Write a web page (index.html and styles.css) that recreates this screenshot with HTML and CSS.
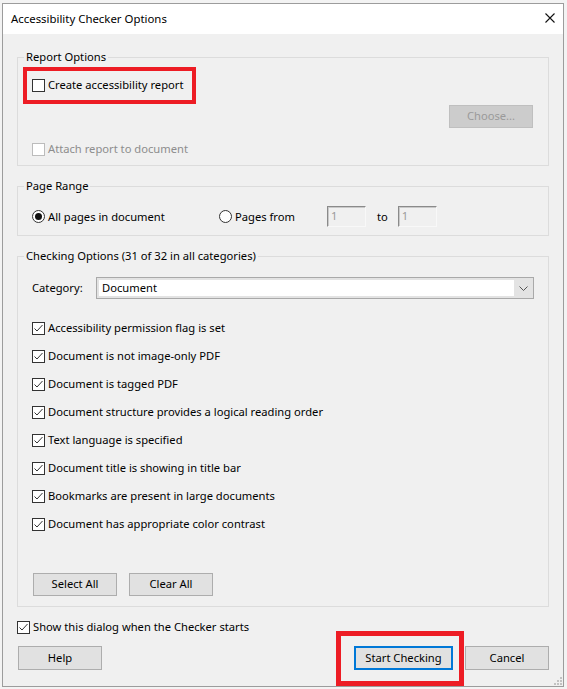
FILE: index.html
```html
<!DOCTYPE html>
<html>
<head>
<meta charset="utf-8">
<title>Accessibility Checker Options</title>
<link rel="stylesheet" href="styles.css">
</head>
<body>
<div class="window">
  <div class="titlebar">
    <span class="title">Accessibility Checker Options</span>
    <svg class="close" width="10" height="10" viewBox="0 0 10 10"><path d="M0.5 0.5 L9.5 9.5 M9.5 0.5 L0.5 9.5" stroke="#111" stroke-width="1.1" fill="none"/></svg>
  </div>
  <div class="content">
    <fieldset class="group g-report">
      <legend>Report Options</legend>
      <div class="check row-create"><span class="box"></span><span>Create accessibility report</span></div>
      <div class="choose-row"><div class="btn btn-disabled">Choose...</div></div>
      <div class="check row-attach disabled"><span class="box"></span><span>Attach report to document</span></div>
    </fieldset>

    <fieldset class="group g-range">
      <legend>Page Range</legend>
      <div class="range-row">
        <div class="radio r-all"><span class="circle on"></span><span>All pages in document</span></div>
        <div class="radio r-from"><span class="circle"></span><span>Pages from</span></div>
        <div class="num">1</div>
        <span class="to">to</span>
        <div class="num">1</div>
      </div>
    </fieldset>

    <fieldset class="group g-check">
      <legend>Checking Options (31 of 32 in all categories)</legend>
      <div class="cat-row">
        <span class="cat-label">Category:</span>
        <div class="select">
          <div class="select-field">Document</div>
          <div class="select-arrow"><svg width="9" height="5" viewBox="0 0 9 5"><path d="M0.5 0.5 L4.5 4.5 L8.5 0.5" stroke="#555" stroke-width="1" fill="none"/></svg></div>
        </div>
      </div>
      <div class="check-list">
        <div class="check"><span class="box"><svg width="11" height="11" viewBox="0 0 11 11"><path d="M1.5 5.5 L4 8 L9.5 2" stroke="#333" stroke-width="1" fill="none"/></svg></span><span>Accessibility permission flag is set</span></div>
        <div class="check"><span class="box"><svg width="11" height="11" viewBox="0 0 11 11"><path d="M1.5 5.5 L4 8 L9.5 2" stroke="#333" stroke-width="1" fill="none"/></svg></span><span>Document is not image-only PDF</span></div>
        <div class="check"><span class="box"><svg width="11" height="11" viewBox="0 0 11 11"><path d="M1.5 5.5 L4 8 L9.5 2" stroke="#333" stroke-width="1" fill="none"/></svg></span><span>Document is tagged PDF</span></div>
        <div class="check"><span class="box"><svg width="11" height="11" viewBox="0 0 11 11"><path d="M1.5 5.5 L4 8 L9.5 2" stroke="#333" stroke-width="1" fill="none"/></svg></span><span>Document structure provides a logical reading order</span></div>
        <div class="check"><span class="box"><svg width="11" height="11" viewBox="0 0 11 11"><path d="M1.5 5.5 L4 8 L9.5 2" stroke="#333" stroke-width="1" fill="none"/></svg></span><span>Text language is specified</span></div>
        <div class="check"><span class="box"><svg width="11" height="11" viewBox="0 0 11 11"><path d="M1.5 5.5 L4 8 L9.5 2" stroke="#333" stroke-width="1" fill="none"/></svg></span><span>Document title is showing in title bar</span></div>
        <div class="check"><span class="box"><svg width="11" height="11" viewBox="0 0 11 11"><path d="M1.5 5.5 L4 8 L9.5 2" stroke="#333" stroke-width="1" fill="none"/></svg></span><span>Bookmarks are present in large documents</span></div>
        <div class="check"><span class="box"><svg width="11" height="11" viewBox="0 0 11 11"><path d="M1.5 5.5 L4 8 L9.5 2" stroke="#333" stroke-width="1" fill="none"/></svg></span><span>Document has appropriate color contrast</span></div>
      </div>
      <div class="sel-row">
        <div class="btn">Select All</div>
        <div class="btn">Clear All</div>
      </div>
    </fieldset>

    <div class="check show-row"><span class="box"><svg width="11" height="11" viewBox="0 0 11 11"><path d="M1.5 5.5 L4 8 L9.5 2" stroke="#333" stroke-width="1" fill="none"/></svg></span><span>Show this dialog when the Checker starts</span></div>

    <div class="footer">
      <div class="btn btn-help">Help</div>
      <div class="spacer"></div>
      <div class="btn btn-start">Start Checking</div>
      <div class="btn btn-cancel">Cancel</div>
    </div>
  </div>
  <svg class="grip" width="8" height="8" viewBox="0 0 8 8">
    <rect x="6" y="0" width="2" height="2" fill="#c2c2c2"/>
    <rect x="3" y="3" width="2" height="2" fill="#c2c2c2"/>
    <rect x="6" y="3" width="2" height="2" fill="#c2c2c2"/>
    <rect x="0" y="6" width="2" height="2" fill="#c2c2c2"/>
    <rect x="3" y="6" width="2" height="2" fill="#c2c2c2"/>
    <rect x="6" y="6" width="2" height="2" fill="#c2c2c2"/>
  </svg>
</div>
<div class="mark mark-report"></div>
<div class="mark mark-start"></div>
</body>
</html>
```

FILE: styles.css
```css
html, body {
  margin: 0;
  padding: 0;
}
body {
  background: #f3f3f3;
  font-family: "Noto Sans", "Open Sans", sans-serif;
  font-size: 11.2px;
  color: #000;
  position: relative;
  width: 567px;
  height: 689px;
  overflow: hidden;
}
.window {
  position: relative;
  margin: 3px 0 0 2px;
  width: 560px;
  height: 682px;
  border: 1px solid #9c9c9c;
  background: #f0f0f0;
}
.titlebar {
  height: 30px;
  background: #fff;
  display: flex;
  align-items: center;
  justify-content: space-between;
  padding: 0 8px 0 8px;
}
.title {
  font-size: 11.4px;
  margin-top: -1px;
}
.close {
  display: block;
  margin-top: -2px;
}
.content {
  padding: 16px 14px 0 14px;
}
.group {
  margin: 0;
  border: 1px solid #dcdcdc;
  padding: 0 14px;
  min-inline-size: 0;
}
.group legend {
  padding: 0 2px;
  margin-left: -8px;
  line-height: 14px;
  height: 14px;
}
.g-report {
  padding-bottom: 6px;
}
.g-range {
  margin-top: 13px;
  padding-bottom: 8px;
}
.g-check {
  margin-top: 13px;
  padding-bottom: 10px;
}

.check {
  display: flex;
  align-items: center;
  height: 20px;
  white-space: nowrap;
}
.check > span:last-child {
  margin-top: -1px;
}
.box {
  width: 13px;
  height: 13px;
  box-sizing: border-box;
  border: 1px solid #333;
  background: #fff;
  margin-right: 3px;
  flex: none;
  display: flex;
  align-items: center;
  justify-content: center;
}
.box svg {
  display: block;
}
.check.disabled {
  color: #8d8d8d;
}
.check.disabled .box {
  border-color: #bcbcbc;
}
.row-create {
  margin-top: 11px;
}
.choose-row {
  margin-top: 10px;
  display: flex;
  justify-content: flex-end;
  padding-right: 1px;
}
.row-attach {
  margin-top: 11px;
}

.btn {
  box-sizing: border-box;
  height: 23px;
  width: 84px;
  background: #e1e1e1;
  border: 1px solid #adadad;
  display: flex;
  align-items: center;
  justify-content: center;
  white-space: nowrap;
  padding-bottom: 2px;
}
.btn-disabled {
  background: #cccccc;
  border-color: #bfbfbf;
  color: #9a9a9a;
}

.range-row {
  margin-top: 13px;
  height: 21px;
  display: flex;
  align-items: center;
}
.radio {
  display: flex;
  align-items: center;
  white-space: nowrap;
}
.radio > span:last-child {
  margin-top: -1px;
}
.r-all {
  width: 187px;
}
.r-from {
  width: 108px;
}
.circle {
  width: 13px;
  height: 13px;
  box-sizing: border-box;
  border: 1px solid #333;
  border-radius: 50%;
  background: #fff;
  margin-right: 3px;
  flex: none;
  display: flex;
  align-items: center;
  justify-content: center;
}
.circle.on::after {
  content: "";
  width: 7px;
  height: 7px;
  border-radius: 50%;
  background: #111;
}
.num {
  box-sizing: border-box;
  width: 39px;
  height: 21px;
  border: 1px solid;
  border-color: #8a8a8a #f8f8f8 #f8f8f8 #8a8a8a;
  box-shadow: inset 1px 1px 0 #c9c9c9;
  color: #9a9a9a;
  padding-left: 3px;
  line-height: 18px;
}
.to {
  margin: -1px 10px 0 11px;
}

.cat-row {
  margin-top: 14px;
  display: flex;
  align-items: center;
}
.cat-label {
  width: 64px;
  flex: none;
  margin-top: -2px;
}
.select {
  flex: 1;
  box-sizing: border-box;
  height: 22px;
  border: 1px solid #a9a9a9;
  background: #e3e3e3;
  padding: 2px 0 2px 2px;
  display: flex;
}
.select-field {
  flex: 1;
  background: #fff;
  padding-left: 3px;
  padding-bottom: 2px;
  display: flex;
  align-items: center;
}
.select-arrow {
  width: 19px;
  display: flex;
  align-items: center;
  justify-content: center;
}
.select-arrow svg {
  display: block;
}

.check-list {
  margin-top: 19px;
  display: flex;
  flex-direction: column;
  gap: 8px;
}
.sel-row {
  margin-top: 39px;
  display: flex;
  gap: 12px;
  padding-left: 1px;
}

.show-row {
  margin-top: 10px;
}
.footer {
  margin-top: 9px;
  display: flex;
}
.footer .btn {
  height: 24px;
}
.btn-help {
  margin-left: 1px;
}
.spacer {
  flex: 1;
}
.btn-start {
  width: 99px;
  border: 2px solid #0078d7;
  margin-right: 12px;
}

.grip {
  position: absolute;
  right: 1px;
  bottom: 1px;
}
.mark {
  position: absolute;
  box-sizing: border-box;
  border: 4px solid #ed1c24;
}
.mark-report {
  left: 23px;
  top: 67px;
  width: 173px;
  height: 37px;
}
.mark-start {
  left: 336px;
  top: 631px;
  width: 128px;
  height: 55px;
  border-width: 5px;
}
```
